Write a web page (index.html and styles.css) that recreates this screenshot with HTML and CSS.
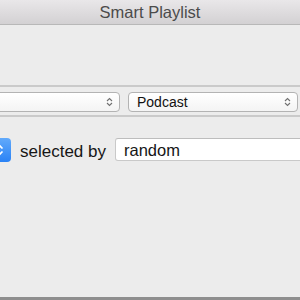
FILE: index.html
```html
<!DOCTYPE html>
<html>
<head>
<meta charset="utf-8">
<link rel="stylesheet" href="styles.css">
</head>
<body>
<div class="window">
  <div class="titlebar">Smart Playlist</div>
  <div class="content">
    <div class="criteria">
      <div class="popup popup-field">
        <span></span>
        <svg class="chev" width="7" height="10" viewBox="0 0 7 10"><path d="M1 4 L3.5 1.5 L6 4 M1 6 L3.5 8.5 L6 6" fill="none" stroke="#707070" stroke-width="1.1"/></svg>
      </div>
      <div class="popup popup-value">
        <span>Podcast</span>
        <svg class="chev" width="7" height="10" viewBox="0 0 7 10"><path d="M1 4 L3.5 1.5 L6 4 M1 6 L3.5 8.5 L6 6" fill="none" stroke="#707070" stroke-width="1.1"/></svg>
      </div>
    </div>
    <div class="selection">
      <div class="stepper">
        <svg width="9" height="14" viewBox="0 0 9 14"><path d="M1.5 5.5 L4.5 2.5 L7.5 5.5 M1.5 8.5 L4.5 11.5 L7.5 8.5" fill="none" stroke="#ffffff" stroke-width="1.6"/></svg>
      </div>
      <span class="label">selected by</span>
      <div class="field">random</div>
    </div>
  </div>
  <div class="bottombar"></div>
</div>
</body>
</html>
```

FILE: styles.css
```css
html, body {
  margin: 0;
  padding: 0;
}
body {
  width: 300px;
  height: 300px;
  overflow: hidden;
  background: #ececec;
  font-family: "Liberation Sans", Arial, sans-serif;
}
.window {
  display: flex;
  flex-direction: column;
  height: 300px;
}
.titlebar {
  height: 24px;
  line-height: 24px;
  border-bottom: 1px solid #b8b8b8;
  background: linear-gradient(#e9e7e9, #d3d1d3);
  text-align: center;
  font-size: 16.5px;
  color: #4b4b4b;
  flex: 0 0 auto;
}
.content {
  flex: 1;
  padding-top: 60px;
  display: flex;
  flex-direction: column;
}
.criteria {
  display: flex;
  gap: 8px;
  border-top: 2px solid #cacaca;
  border-bottom: 2px solid #cacaca;
  padding: 5px 0 3px;
}
.popup {
  box-sizing: border-box;
  height: 20px;
  flex: 0 0 auto;
  border: 1px solid #b3b3b3;
  border-radius: 4px;
  background: linear-gradient(#ffffff, #f4f4f4);
  display: flex;
  align-items: center;
  justify-content: space-between;
  padding: 0 6px 0 8px;
  font-size: 14px;
  line-height: 18px;
  color: #111;
}
.popup-field {
  width: 140px;
  margin-left: -20px;
}
.popup-value {
  width: 170px;
}
.chev {
  display: block;
}
.selection {
  display: flex;
  align-items: flex-start;
  gap: 9px;
  margin-top: 21px;
}
.stepper {
  flex: 0 0 auto;
  width: 22px;
  height: 24px;
  margin-left: -11px;
  border-radius: 4px;
  background: linear-gradient(#62aafb, #2a82f5);
  display: flex;
  align-items: center;
  justify-content: center;
}
.stepper svg {
  display: block;
  margin-left: -2px;
}
.label {
  flex: 0 0 auto;
  font-size: 17px;
  line-height: 24px;
  padding-top: 2px;
  color: #161616;
}
.field {
  flex: 0 0 auto;
  box-sizing: border-box;
  width: 200px;
  height: 23px;
  border: 1px solid #c9c9c9;
  border-top-color: #bdbdbd;
  border-radius: 3px;
  background: #ffffff;
  padding: 1px 0 0 8px;
  font-size: 16.5px;
  line-height: 21px;
  color: #161616;
}
.bottombar {
  flex: 0 0 auto;
  height: 3px;
  background: #8e8e8e;
}
```
